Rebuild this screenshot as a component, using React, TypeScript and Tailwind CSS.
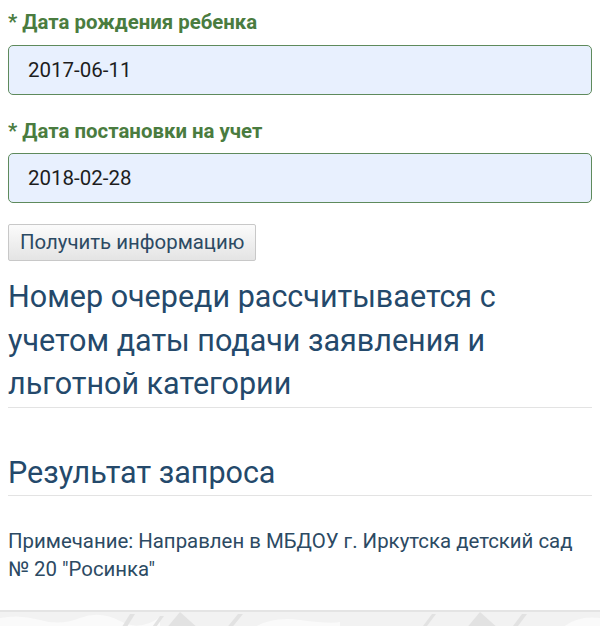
export default function App() {
  return (
    <div className="h-[626px] overflow-hidden bg-white font-['Roboto',sans-serif]">
      <div className="px-2 pt-[9px]">
        <label className="block text-[20.4px] leading-[26px] font-bold text-[#4a7c3f]">* Дата рождения ребенка</label>
        <input
          readOnly
          value="2017-06-11"
          className="mt-[10px] block w-full h-[50px] rounded-[5px] border-[1.5px] border-[#5e8a5c] bg-[#e8f0fe] px-[19px] text-[20.5px] text-[#1d1d1d] outline-none"
        />
        <label className="mt-[23px] block text-[20.4px] leading-[26px] font-bold text-[#4a7c3f]">* Дата постановки на учет</label>
        <input
          readOnly
          value="2018-02-28"
          className="mt-[9px] block w-full h-[50px] rounded-[5px] border-[1.5px] border-[#5e8a5c] bg-[#e8f0fe] px-[19px] text-[20.5px] text-[#1d1d1d] outline-none"
        />
        <button className="mt-[21px] h-[37px] px-[11px] rounded-[2px] border border-[#c8c8c8] bg-gradient-to-b from-[#fbfbfb] to-[#e4e4e4] text-[20.4px] text-[#2c4a63]">
          Получить информацию
        </button>
        <h2 className="mt-[14px] text-[30.5px] leading-[43.5px] font-normal text-[#24496b] border-b border-[#e3e3e3] pb-px">
          Номер очереди рассчитывается с учетом даты подачи заявления и льготной категории
        </h2>
        <h2 className="mt-[43px] text-[30.5px] leading-[44px] font-normal text-[#24496b] border-b border-[#e3e3e3]">
          Результат запроса
        </h2>
        <p className="mt-[31px] text-[20.4px] leading-[28px] text-[#2c4a63]">
          Примечание: Направлен в МБДОУ г. Иркутска детский сад № 20 "Росинка"
        </p>
      </div>
      <div className="mt-[27px] h-[20px] border-t-2 border-[#e4e4e4] bg-[#f2f2f2] overflow-hidden">
        <svg width="600" height="18" viewBox="0 0 600 18" className="block">
          <g fill="#fafafa">
            <path d="M0 6 Q20 2 40 8 T80 6 T120 9 T160 5 L160 18 L0 18 Z" />
            <path d="M250 18 Q270 4 300 8 T340 10 L340 18 Z" />
            <path d="M560 18 Q575 3 600 6 L600 18 Z" />
          </g>
          <g fill="#e2e2e2">
            <path d="M120 18 L130 2 L135 2 L125 18 Z" />
            <path d="M150 18 L160 4 L164 4 L154 18 Z" />
            <path d="M165 18 L180 0 L200 18 Z" />
            <path d="M225 18 L238 2 L243 2 L230 18 Z" />
            <path d="M420 18 L432 2 L436 2 L424 18 Z" />
            <path d="M465 18 L480 0 L500 18 Z" />
            <path d="M510 18 L522 2 L527 2 L515 18 Z" />
          </g>
        </svg>
      </div>
    </div>
  );
}
